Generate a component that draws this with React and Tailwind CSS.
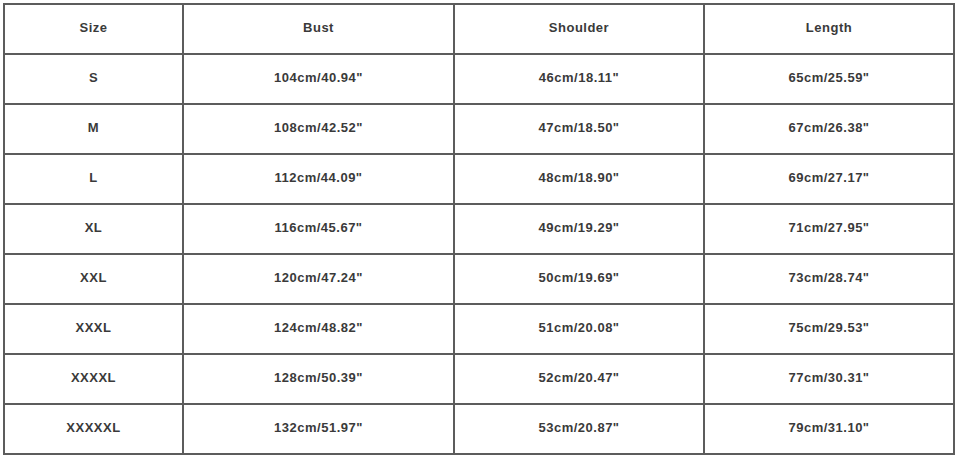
const ROWS = [
  ['S', '104cm/40.94"', '46cm/18.11"', '65cm/25.59"'],
  ['M', '108cm/42.52"', '47cm/18.50"', '67cm/26.38"'],
  ['L', '112cm/44.09"', '48cm/18.90"', '69cm/27.17"'],
  ['XL', '116cm/45.67"', '49cm/19.29"', '71cm/27.95"'],
  ['XXL', '120cm/47.24"', '50cm/19.69"', '73cm/28.74"'],
  ['XXXL', '124cm/48.82"', '51cm/20.08"', '75cm/29.53"'],
  ['XXXXL', '128cm/50.39"', '52cm/20.47"', '77cm/30.31"'],
  ['XXXXXL', '132cm/51.97"', '53cm/20.87"', '79cm/31.10"']
]

const cell = 'border-2 border-[#5c5c5c] h-[50px] p-0 pb-[2px] text-center align-middle'

export default function App() {
  return (
    <div className="h-[457px] w-[956px] bg-white pl-[3px] pt-[3px] font-['Liberation_Sans',Arial,sans-serif] text-[13px] font-bold tracking-[0.5px] text-[#3a3a3a]">
      <table className="w-[950px] table-fixed border-collapse">
        <colgroup>
          <col className="w-[179px]" />
          <col className="w-[271px]" />
          <col className="w-[250px]" />
          <col className="w-[250px]" />
        </colgroup>
        <thead>
          <tr>
            {['Size', 'Bust', 'Shoulder', 'Length'].map((h) => (
              <th key={h} className={`${cell} font-bold`}>{h}</th>
            ))}
          </tr>
        </thead>
        <tbody>
          {ROWS.map((r) => (
            <tr key={r[0]}>
              {r.map((v, i) => (
                <td key={i} className={cell}>{v}</td>
              ))}
            </tr>
          ))}
        </tbody>
      </table>
    </div>
  )
}
